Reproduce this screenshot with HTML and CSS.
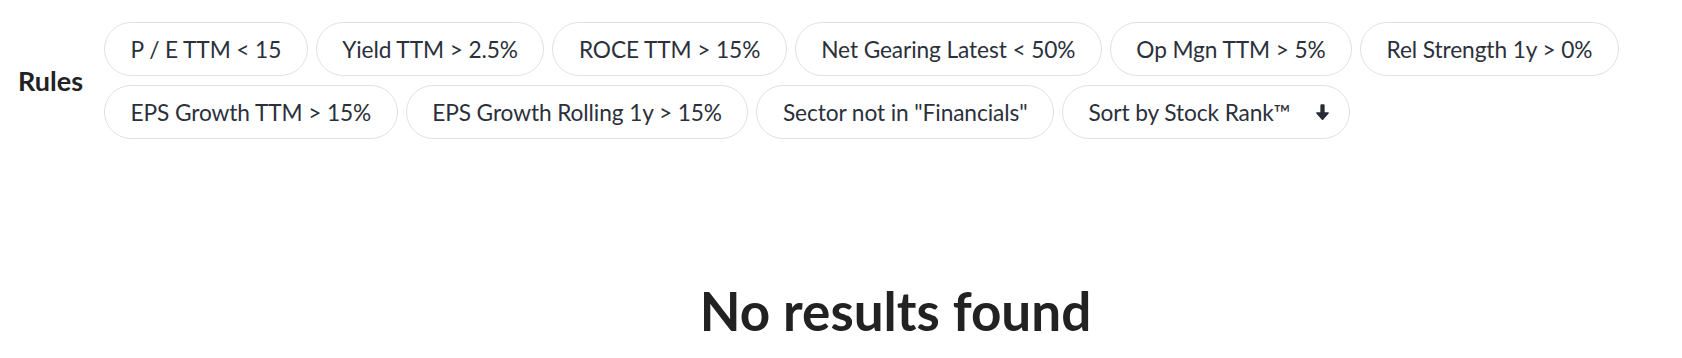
FILE: index.html
```html
<!DOCTYPE html>
<html lang="en">
<head>
<meta charset="utf-8">
<title>Rules</title>
<link rel="stylesheet" href="styles.css">
</head>
<body>
<main class="screen">
  <section class="rules">
    <div class="rules-label">Rules</div>
    <div class="rules-list">
      <span class="pill">P / E TTM &lt; 15</span>
      <span class="pill">Yield TTM &gt; 2.5%</span>
      <span class="pill">ROCE TTM &gt; 15%</span>
      <span class="pill">Net Gearing Latest &lt; 50%</span>
      <span class="pill">Op Mgn TTM &gt; 5%</span>
      <span class="pill">Rel Strength 1y &gt; 0%</span>
      <span class="pill">EPS Growth TTM &gt; 15%</span>
      <span class="pill">EPS Growth Rolling 1y &gt; 15%</span>
      <span class="pill">Sector not in "Financials"</span>
      <span class="pill pill-sort">Sort by Stock Rank™
        <svg class="sort-icon" viewBox="0 0 14 16" width="15" height="17" aria-hidden="true">
          <path d="M5 1.2 Q5 0.2 6 0.2 h2 Q9 0.2 9 1.2 v6.6 h3.2 Q13.6 7.8 12.8 9 L7.8 14.6 Q7 15.6 6.2 14.6 L1.2 9 Q0.4 7.8 1.8 7.8 h3.2 z" fill="#262b36"/>
        </svg>
      </span>
    </div>
  </section>
  <h1 class="empty">No results found</h1>
</main>
</body>
</html>
```

FILE: styles.css
```css
* { box-sizing: border-box; }

html, body {
  margin: 0;
  padding: 0;
  background: #ffffff;
}

body {
  font-family: Lato, "Open Sans", "Liberation Sans", sans-serif;
  color: #2b303b;
}

.screen {
  padding: 22px 0 0 18px;
}

.rules {
  display: flex;
  align-items: center;
  gap: 21px;
}

.rules-label {
  font-weight: 700;
  font-size: 27px;
  color: #222222;
  flex: none;
}

.rules-list {
  display: flex;
  flex-wrap: wrap;
  gap: 9px 8px;
  flex: 1;
}

.pill {
  display: inline-flex;
  align-items: center;
  height: 54px;
  padding: 0 25.5px;
  border: 1.5px solid #dfe1e8;
  border-radius: 27px;
  font-size: 22.7px;
  letter-spacing: -0.1px;
  color: #2b303b;
  white-space: nowrap;
}

.pill-sort {
  gap: 25px;
  padding-right: 19px;
}

.sort-icon {
  display: block;
  margin-top: 1px;
}

.empty {
  margin: 140px 0 0 91px;
  text-align: center;
  font-size: 53px;
  font-weight: 700;
  color: #222222;
  line-height: 1.2;
}
```
